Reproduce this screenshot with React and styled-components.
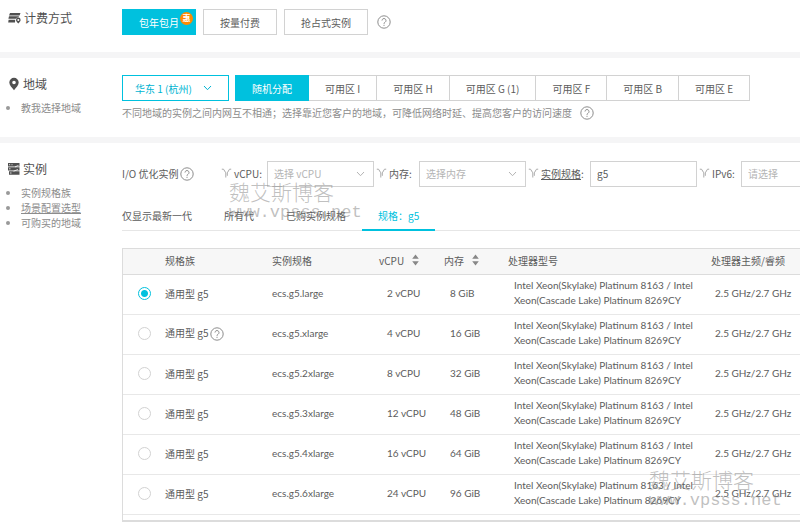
import React, { useState } from "react";
import styled, { createGlobalStyle, css } from "styled-components";

const GlobalStyle = createGlobalStyle`
  * {
    box-sizing: border-box;
  }

  body {
    margin: 0;
    background: #fff;
    color: #5c5c5c;
    font-family: "Noto Sans CJK SC", sans-serif;
    font-size: 10px;
    line-height: 15px;
  }

  button, input, select {
    font: inherit;
    color: inherit;
    margin: 0;
  }
`;

// Page layout
const Page = styled.main`
  position: relative;
  overflow: hidden;
`;

const Section = styled.section`
  display: grid;
  grid-template-columns: 122px minmax(0, 1fr);
  padding: ${(p) => p.$pad};

  & + & {
    border-top: 6px solid #f5f5f6;
  }
`;

const Side = styled.div`
  padding: 1px 0 0 8px;
`;

const SideTitle = styled.h2`
  display: flex;
  align-items: center;
  gap: 3px;
  margin: 0;
  font-size: 12px;
  font-weight: 400;
  line-height: 16px;
  color: #505050;
`;

const SideList = styled.ul`
  margin: 8px 0 0;
  padding: 0 0 0 13px;
  color: #999;
`;

const SideLink = styled.a`
  color: #8c8c8c;
  text-decoration: ${(p) => (p.$underline ? "underline" : "none")};
`;

const Row = styled.div`
  display: flex;
  align-items: center;
  gap: ${(p) => p.$gap || "6px"};
`;

// Controls
const Choice = styled.button`
  position: relative;
  height: 26px;
  padding: 0 16px;
  border: 1px solid #d2d2d2;
  background: #fff;
  white-space: nowrap;
  cursor: pointer;

  ${(p) =>
    p.$active &&
    css`
      border-color: #00c1de;
      background: #00c1de;
      color: #fff;
    `}
`;

const Badge = styled.span`
  position: absolute;
  top: 2px;
  right: 2px;
  width: 13px;
  height: 13px;
  border-radius: 50%;
  background: #ff8a00;
  color: #fff;
  font-size: 8px;
  font-weight: 700;
  line-height: 12px;
  text-align: center;
`;

const Zones = styled.div`
  display: flex;

  ${Choice} + ${Choice} {
    border-left-width: 0;
  }
`;

const SelectBox = styled.span`
  display: grid;
  align-items: center;
  flex: none;
  width: 107px;
  height: 26px;
  border: 1px solid ${(p) => (p.$primary ? "#00c1de" : "#d2d2d2")};
  color: ${(p) => (p.$primary ? "#00b4d2" : "#b4b4b4")};

  select, svg {
    grid-area: 1 / 1;
  }

  svg {
    justify-self: end;
    margin-right: ${(p) => (p.$primary ? "16px" : "8px")};
    pointer-events: none;
  }
`;

const Select = styled.select`
  width: 100%;
  height: 24px;
  padding: 0 ${(p) => (p.$wide ? "12px" : "6px")};
  border: 0;
  background: transparent;
  appearance: none;
  outline: none;
`;

const TextInput = styled.input`
  flex: none;
  width: 107px;
  height: 26px;
  padding: 0 6px;
  border: 1px solid #d2d2d2;
  outline: none;
`;

const HelpButton = styled.button`
  display: inline-flex;
  padding: 0;
  border: 0;
  background: none;
  color: #8c8c8c;
  vertical-align: middle;
  margin-left: ${(p) => p.$gap || "0"};
`;

const Hint = styled.p`
  display: flex;
  align-items: center;
  margin: 4px 0 0;
  color: #8c8c8c;
`;

// Instance filters and tabs
const Filters = styled.div`
  display: flex;
  align-items: center;
  height: 27px;
  white-space: nowrap;
`;

const FilterTitle = styled.span`
  display: flex;
  align-items: center;
  flex: none;
  width: 99px;
`;

const Filter = styled.div`
  display: flex;
  align-items: center;
  flex: none;
  justify-content: space-between;
  width: ${(p) => p.$width};
  margin-right: 2px;
`;

const FilterLabel = styled.label`
  display: flex;
  align-items: center;
  gap: 2px;
`;

const Tabs = styled.div`
  display: flex;
  margin-top: 15px;
  border-bottom: 1px solid #e6e6e6;
`;

const Tab = styled.button`
  height: 29px;
  margin-bottom: -1px;
  padding: 0 16px;
  border: 0;
  border-bottom: 2px solid ${(p) => (p.$active ? "#00c1de" : "transparent")};
  background: none;
  color: ${(p) => (p.$active ? "#00c1de" : "#5c5c5c")};
  white-space: nowrap;

  &:first-child {
    padding-left: 0;
  }
`;

// Instance table
const TableWrap = styled.div`
  margin-top: 17px;
  margin-right: -20px;
  padding-bottom: 5px;
  border: 1px solid #dcdcdc;
  border-bottom-width: 2px;
`;

const Table = styled.table`
  width: 100%;
  table-layout: fixed;
  border-collapse: collapse;
`;

const Col = styled.col`
  width: ${(p) => p.$width};
`;

const Th = styled.th`
  height: 25px;
  padding: 0 0 2px;
  border-bottom: 1px solid #dcdcdc;
  background: #f7f7f7;
  font-weight: 400;
  text-align: left;
  white-space: nowrap;
`;

const Td = styled.td`
  height: 40px;
  padding: 0 0 2px ${(p) => p.$indent || "0"};
  border-bottom: 1px solid #e8e8e8;
  white-space: nowrap;
`;

const DataTd = styled(Td)`
  font-family: Lato, "Noto Sans CJK SC", sans-serif;
`;

const SortLabel = styled.span`
  display: flex;
  align-items: center;
  gap: 8px;
`;

const Radio = styled.input`
  display: block;
  appearance: none;
  width: 13px;
  height: 13px;
  margin-left: 15px;
  border: 1px solid #d2d2d2;
  border-radius: 50%;

  &:checked {
    border-color: #00c1de;
    background: radial-gradient(circle, #00c1de 3px, #fff 4px);
  }
`;

const Watermark = styled.div`
  position: absolute;
  top: ${(p) => p.$top};
  left: ${(p) => p.$left};
  color: rgba(130, 130, 130, 0.5);
  font-size: 21px;
  font-weight: 300;
  line-height: 22px;
  pointer-events: none;
`;

const WatermarkUrl = styled.div`
  font-family: "Liberation Mono", monospace;
  font-size: 17px;
  line-height: 22px;
`;

// Icons
const BillingIcon = () => (
  <svg width="13" height="12" viewBox="0 0 13 12" fill="#505050">
    <path d="M2 1h10.500l-1 2.500H1zM1 4.300h10l-.6 1.200A3 3 0 0 0 7.700 6.800H.4zM.6 7.700h6.600L7 10.500H.2z" />
    <path fillRule="evenodd" d="M10.300 5.600a2.300 2.300 0 0 1 2.300 2.300c0 1.400-1.300 2.300-2.300 3.600C9.300 10.200 8 9.300 8 7.900a2.300 2.300 0 0 1 2.300-2.300zm0 1.300a1 1 0 1 0 0 2 1 1 0 0 0 0-2z" />
  </svg>
);

const PinIcon = () => (
  <svg width="12" height="14" viewBox="0 0 12 14" fill="#505050">
    <path fillRule="evenodd" d="M6 .8a4.700 4.700 0 0 1 4.700 4.700C10.700 8.500 8 10.300 6 13.300 4 10.300 1.300 8.500 1.300 5.500A4.700 4.700 0 0 1 6 .8zm0 2.900a1.800 1.800 0 1 0 0 3.600 1.800 1.800 0 0 0 0-3.600z" />
  </svg>
);

const ServerIcon = () => (
  <svg width="12" height="12" viewBox="0 0 12 12">
    <path fill="#505050" d="M0 0h11.500v3.400H0zM0 4.200h11.500v3.300H0zM1 8.300h10.500v3.400H1z" />
    <path stroke="#fff" strokeWidth=".8" d="M1 1.700h1.200M3.500 1.700h1M1 5.800h1.500M2 10h1.500M7 3.900l3.500-1.500M5.500 8.200l4.500-1.700" />
  </svg>
);

const Chevron = () => (
  <svg width="9" height="6" viewBox="0 0 9 6" fill="none" stroke="currentColor">
    <path d="M1 1l3.500 3.700L8 1" />
  </svg>
);

const FilterIcon = () => (
  <svg width="11" height="11" viewBox="0 0 11 11" fill="none" stroke="#aaa">
    <path d="M.8 1.200h1.700L4.800 4.800v4.700M10.200 1.200H8.500L6.300 4.800v3" />
  </svg>
);

const SortIcon = () => (
  <svg width="7" height="12" viewBox="0 0 7 12" fill="#888">
    <path d="M3.500 .5L6.800 4.700H.2zM3.500 11.500L6.800 7.300H.2z" />
  </svg>
);

const Help = ({ gap }) => (
  <HelpButton type="button" aria-label="帮助" $gap={gap}>
    <svg width="14" height="14" viewBox="0 0 14 14" fill="none" stroke="currentColor">
      <circle cx="7" cy="7" r="6.200" />
      <path d="M5 5.500a2 2 0 1 1 3.100 1.700C7.300 7.700 7 8 7 8.800M7 9.800v1.100" />
    </svg>
  </HelpButton>
);

const zones = ["随机分配", "可用区 I", "可用区 H", "可用区 G (1)", "可用区 F", "可用区 B", "可用区 E"];
const tabs = ["仅显示最新一代", "所有代", "已购实例规格", "规格：g5"];

const instances = [
  { spec: "ecs.g5.large", cpu: 2, memory: 8 },
  { spec: "ecs.g5.xlarge", cpu: 4, memory: 16, help: true },
  { spec: "ecs.g5.2xlarge", cpu: 8, memory: 32 },
  { spec: "ecs.g5.3xlarge", cpu: 12, memory: 48 },
  { spec: "ecs.g5.4xlarge", cpu: 16, memory: 64 },
  { spec: "ecs.g5.6xlarge", cpu: 24, memory: 96 },
];

const App = () => {
  const [billing, setBilling] = useState("包年包月");
  const [zone, setZone] = useState("随机分配");
  const [tab, setTab] = useState("规格：g5");
  const [keyword, setKeyword] = useState("g5");
  const [selected, setSelected] = useState("ecs.g5.large");

  return (
    <Page>
      <GlobalStyle />

      <Section $pad="9px 0 17px">
        <Side>
          <SideTitle>
            <BillingIcon />
            计费方式
          </SideTitle>
        </Side>
        <Row $gap="7px">
          {["包年包月", "按量付费", "抢占式实例"].map((name) => (
            <Choice key={name} type="button" $active={billing === name} onClick={() => setBilling(name)}>
              {name}
              {name === "包年包月" && <Badge>惠</Badge>}
            </Choice>
          ))}
          <Help gap="2px" />
        </Row>
      </Section>

      <Section $pad="17px 0">
        <Side>
          <SideTitle>
            <PinIcon />
            地域
          </SideTitle>
          <SideList>
            <li><SideLink href="#region">教我选择地域</SideLink></li>
          </SideList>
        </Side>
        <div>
          <Row>
            <SelectBox $primary>
              <Select $wide aria-label="地域" defaultValue="hangzhou">
                <option value="hangzhou">华东 1 (杭州)</option>
              </Select>
              <Chevron />
            </SelectBox>
            <Zones>
              {zones.map((name) => (
                <Choice key={name} type="button" $active={zone === name} onClick={() => setZone(name)}>
                  {name}
                </Choice>
              ))}
            </Zones>
          </Row>
          <Hint>
            不同地域的实例之间内网互不相通；选择靠近您客户的地域，可降低网络时延、提高您客户的访问速度
            <Help gap="8px" />
          </Hint>
        </div>
      </Section>

      <Section $pad="17px 0 6px">
        <Side>
          <SideTitle>
            <ServerIcon />
            实例
          </SideTitle>
          <SideList>
            <li><SideLink href="#family">实例规格族</SideLink></li>
            <li><SideLink href="#scene" $underline>场景配置选型</SideLink></li>
            <li><SideLink href="#available">可购买的地域</SideLink></li>
          </SideList>
        </Side>
        <div>
          <Filters>
            <FilterTitle>
              I/O 优化实例
              <Help gap="2px" />
            </FilterTitle>
            <Filter $width="153px">
              <FilterLabel htmlFor="vcpu"><FilterIcon />vCPU:</FilterLabel>
              <SelectBox>
                <Select id="vcpu"><option>选择 vCPU</option></Select>
                <Chevron />
              </SelectBox>
            </Filter>
            <Filter $width="150px">
              <FilterLabel htmlFor="memory"><FilterIcon />内存:</FilterLabel>
              <SelectBox>
                <Select id="memory"><option>选择内存</option></Select>
                <Chevron />
              </SelectBox>
            </Filter>
            <Filter $width="169px">
              <FilterLabel htmlFor="spec"><FilterIcon /><span><u>实例规格</u>:</span></FilterLabel>
              <TextInput id="spec" value={keyword} onChange={(e) => setKeyword(e.target.value)} />
            </Filter>
            <Filter $width="149px">
              <FilterLabel htmlFor="ipv6"><FilterIcon />IPv6:</FilterLabel>
              <SelectBox>
                <Select id="ipv6"><option>请选择</option></Select>
                <Chevron />
              </SelectBox>
            </Filter>
          </Filters>

          <Tabs>
            {tabs.map((name) => (
              <Tab key={name} type="button" $active={tab === name} onClick={() => setTab(name)}>
                {name}
              </Tab>
            ))}
          </Tabs>

          <TableWrap>
            <Table>
              <colgroup>
                <Col $width="42px" />
                <Col $width="107px" />
                <Col $width="107px" />
                <Col $width="65px" />
                <Col $width="64px" />
                <Col $width="203px" />
                <Col />
              </colgroup>
              <thead>
                <tr>
                  <Th />
                  <Th>规格族</Th>
                  <Th>实例规格</Th>
                  <Th><SortLabel>vCPU<SortIcon /></SortLabel></Th>
                  <Th><SortLabel>内存<SortIcon /></SortLabel></Th>
                  <Th>处理器型号</Th>
                  <Th>处理器主频/睿频</Th>
                </tr>
              </thead>
              <tbody>
                {instances.map((item) => (
                  <tr key={item.spec}>
                    <Td>
                      <Radio
                        type="radio"
                        name="instance"
                        aria-label={item.spec}
                        checked={selected === item.spec}
                        onChange={() => setSelected(item.spec)}
                      />
                    </Td>
                    <Td>
                      通用型 g5
                      {item.help && <Help gap="2px" />}
                    </Td>
                    <DataTd>{item.spec}</DataTd>
                    <DataTd $indent="8px">{item.cpu} vCPU</DataTd>
                    <DataTd $indent="6px">{item.memory} GiB</DataTd>
                    <DataTd $indent="6px">
                      Intel Xeon(Skylake) Platinum 8163 / Intel
                      <br />
                      Xeon(Cascade Lake) Platinum 8269CY
                    </DataTd>
                    <DataTd $indent="4px">2.5 GHz/2.7 GHz</DataTd>
                  </tr>
                ))}
              </tbody>
            </Table>
          </TableWrap>
        </div>
      </Section>

      <Watermark $top="180px" $left="229px">
        魏艾斯博客
        <WatermarkUrl>www.vpsss.net</WatermarkUrl>
      </Watermark>
      <Watermark $top="468px" $left="649px">
        魏艾斯博客
        <WatermarkUrl>www.vpsss.net</WatermarkUrl>
      </Watermark>
    </Page>
  );
};

export default App;
